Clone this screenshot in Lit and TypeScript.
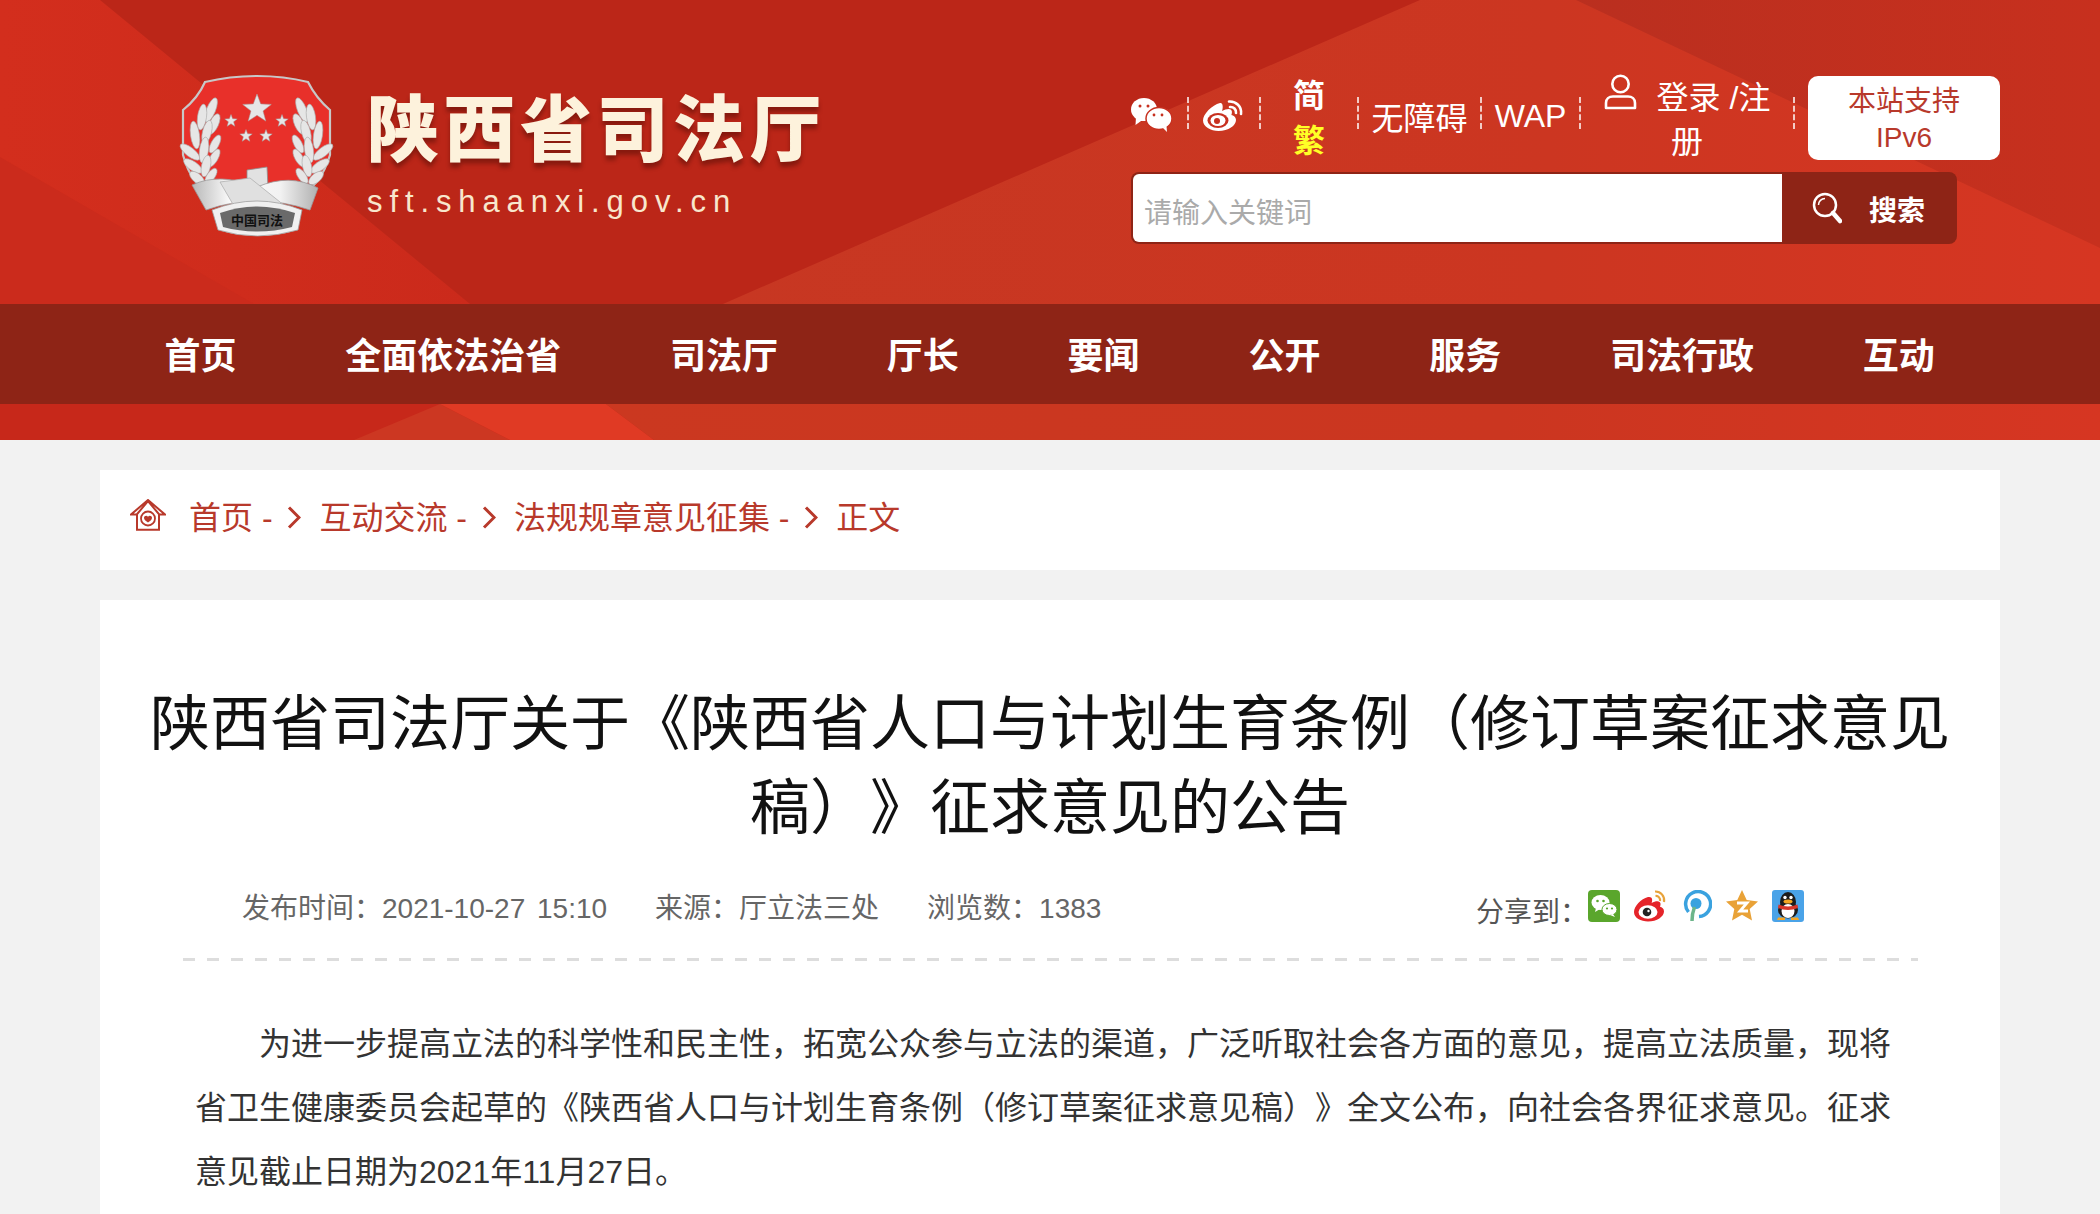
import { LitElement, html, css, svg } from "lit";
import { customElement } from "lit/decorators.js";

const NAV = ["首页","全面依法治省","司法厅","厅长","要闻","公开","服务","司法行政","互动"];
const CRUMBS = ["首页","互动交流","法规规章意见征集"];

const star = (cx:number, cy:number, r:number, fill="#e6e6e6") => {
  const pts:string[] = [];
  for (let i=0;i<10;i++){
    const a = (Math.PI/5)*i - Math.PI/2;
    const rr = i%2===0 ? r : r*0.42;
    pts.push(`${(cx+rr*Math.cos(a)).toFixed(1)},${(cy+rr*Math.sin(a)).toFixed(1)}`);
  }
  return svg`<polygon points=${pts.join(" ")} fill=${fill} stroke="#a0a0a0" stroke-width=".5"/>`;
};

const LEAVES = [[38,50,22,4.5,13],[29,57,8,4.5,13],[41,64,24,4.5,11],[22,75,-8,4.5,14],[34,72,14,4.5,12],[42,84,28,4,10],[17,92,-52,4.5,12],[31,90,8,4.5,13],[41,98,30,4,10],[20,106,-55,4.5,11],[33,106,12,4.5,11],[24,118,-50,4.5,9],[38,116,35,4,9]];
const laurel = (mirror:boolean) => svg`<g transform=${mirror?"translate(170,0) scale(-1,1)":"translate(3,0)"}>${LEAVES.map(([x,y,r,a,b])=>svg`<ellipse cx=${x} cy=${y} rx=${a} ry=${b} transform=${`rotate(${r} ${x} ${y})`} fill="#e6e6e6" stroke="#a8a8a8" stroke-width=".6"/>`)}</g>`;

const emblem = html`<svg class="emblem" viewBox="0 0 180 180" width="180" height="180" aria-hidden="true">
  <defs><linearGradient id="rib" x1="0" x2="1"><stop offset="0" stop-color="#b8b8b8"/><stop offset=".3" stop-color="#fafafa"/><stop offset=".7" stop-color="#f2f2f2"/><stop offset="1" stop-color="#b0b0b0"/></linearGradient></defs>
  <path d="M13 50 Q28 38 35 22 Q60 16 87 16 Q114 16 138 22 Q146 38 160 50 L160 95 Q150 128 128 135 L45 135 Q22 128 13 95Z" fill="#e8302a" stroke="#c8c8c8" stroke-width="2.2"/>
  ${star(87,49,15)}${star(61,61,6.5)}${star(112,61,6.5)}${star(76,76,6.5)}${star(96,76,6.5)}
  ${laurel(false)}${laurel(true)}
  <path d="M77 110 L97 107 L98 128 L77 130Z" fill="#e2e2e2" stroke="#8f8f8f" stroke-width=".8"/>
  <path d="M22 125 Q50 112 87 127 Q120 113 148 128 L140 150 Q87 132 36 150Z" fill="url(#rib)" stroke="#9a9a9a" stroke-width=".8"/>
  <path d="M50 122 L80 118 L115 146 L64 146Z" fill="#e0e0e0" stroke="#b0b0b0" stroke-width=".8"/>
  <path d="M42 150 Q87 132 132 150 L128 170 Q87 182 48 170Z" fill="#f0f0f0" stroke="#a0a0a0" stroke-width=".8"/>
  <path d="M50 153 Q87 140 125 153 L122 167 Q87 176 53 167Z" fill="#6a6a6a"/>
  <text x="87" y="165" text-anchor="middle" class="em-t">中国司法</text>
</svg>`;

const wechatW = html`<svg class="ic" style="width:41px;height:34px" viewBox="0 0 41 34" aria-hidden="true">
  <ellipse cx="13" cy="11.500" rx="13" ry="11.500" fill="#fff"/><path d="M5 19l-.5 8 7-5z" fill="#fff"/>
  <ellipse cx="28" cy="20.500" rx="13" ry="11" fill="#fff" stroke="#c7301f" stroke-width="1.500"/><path d="M32 30l4 4-.5-6z" fill="#fff"/>
  <circle cx="9" cy="8" r="1.500" fill="#c7301f"/><circle cx="17" cy="8" r="1.500" fill="#c7301f"/>
  <circle cx="23" cy="17" r="1.400" fill="#c7301f"/><circle cx="31" cy="17" r="1.400" fill="#c7301f"/>
</svg>`;

const weiboW = html`<svg class="ic" style="width:41px;height:32px" viewBox="0 0 41 32" aria-hidden="true">
  <path d="M17 4C9 6 0 15 0 21.500 0 27.800 7.700 32 15.500 32 25.500 32 33 26.500 33 21c0-3-2.600-4.500-4.600-5 .9-2.500.7-4.300-.4-5.300-1.800-1.600-5.500-.6-9 1.200 1.500-3.900.7-8.800-2-7.900z" fill="#fff"/>
  <ellipse cx="15" cy="21.500" rx="10.500" ry="7.500" fill="#c7301f"/><ellipse cx="15" cy="21.500" rx="7.500" ry="5.500" fill="#fff"/><circle cx="14" cy="22" r="3" fill="#c7301f"/>
  <path d="M26 2.500C33 2 39 7.500 38 15M27 8c3.500-.4 6.400 2.400 6 6" fill="none" stroke="#fff" stroke-width="2.600" stroke-linecap="round"/>
</svg>`;

const userIcon = html`<svg class="ui" viewBox="0 0 33 36" width="33" height="36" aria-hidden="true">
  <circle cx="16.500" cy="10" r="8.200" fill="none" stroke="#fff" stroke-width="2.600"/>
  <path d="M2 34v-5c0-4 3-6.500 7-6.500h15c4 0 7 2.500 7 6.500v5z" fill="none" stroke="#fff" stroke-width="2.600" stroke-linejoin="round"/>
</svg>`;

const searchIcon = html`<svg class="ic" style="width:30px;height:32px" viewBox="0 0 30 32" aria-hidden="true">
  <circle cx="13" cy="13" r="11" fill="none" stroke="#fff" stroke-width="2.500"/>
  <path d="M6.500 13A6.500 6.500 0 0 1 13 6.500" fill="none" stroke="#fff" stroke-width="1.500"/>
  <path d="M21 21l7 8" stroke="#fff" stroke-width="4.500" stroke-linecap="round"/>
</svg>`;

const homeIcon = html`<svg class="ic" style="width:36px;height:32px" viewBox="0 0 36 32" aria-hidden="true">
  <path d="M1 15.500h5.800L18 2l11.200 13.500H35L18 1zM7 15v15.800h22V15" fill="none" stroke="#b8392b" stroke-width="2"/>
  <circle cx="18" cy="19.500" r="7" fill="none" stroke="#b8392b" stroke-width="1.800"/>
  <path d="M18 23.500c-2.500-1.700-4-3-4-4.800 0-2.200 2.900-2.700 4-1 1.100-1.700 4-1.200 4 1 0 1.800-1.500 3.100-4 4.800z" fill="#b8392b"/>
</svg>`;

const chevron = html`<svg class="chev" viewBox="0 0 14 23" width="14" height="23" aria-hidden="true"><path d="M2 1.500L12 11.500 2 21.500" fill="none" stroke="#b8392b" stroke-width="3"/></svg>`;

const shareWechat = html`<svg viewBox="0 0 32 32" width="32" height="32" aria-hidden="true">
  <rect width="32" height="32" rx="4" fill="#5aa62c"/>
  <ellipse cx="12.500" cy="12.500" rx="9" ry="7.500" fill="#fff"/><path d="M8 18l-1 4 5-3z" fill="#fff"/>
  <ellipse cx="21.500" cy="19.500" rx="7.500" ry="6" fill="#fff" stroke="#5aa62c"/><path d="M25 24l2 3-5-2z" fill="#fff"/>
  <circle cx="9.500" cy="11" r="1.300" fill="#5aa62c"/><circle cx="15.500" cy="11" r="1.300" fill="#5aa62c"/><circle cx="19" cy="18.500" r="1.100" fill="#5aa62c"/><circle cx="24" cy="18.500" r="1.100" fill="#5aa62c"/>
</svg>`;
const shareWeibo = html`<svg viewBox="0 0 32 32" width="32" height="32" aria-hidden="true">
  <path d="M14 7C7 9 0 16 0 22c0 6 7 9.500 14 9.500C23 31.500 30 26.500 30 21.500c0-3-2-4.200-4-4.700 1-2.500.6-4-.4-4.800-1.700-1.300-5-.5-8 1 1.300-3.500.6-6.800-3.600-6z" fill="#e5242a"/>
  <ellipse cx="14" cy="22" rx="9.500" ry="6.800" fill="#fff"/><circle cx="13" cy="22" r="4.300" fill="#222"/><circle cx="14.500" cy="21" r="1.200" fill="#fff"/>
  <path d="M21 1.500c5.500-.3 10 4.500 9 10.500M21.500 6c3-.3 5 2.300 4.500 5" fill="none" stroke="#e8a33a" stroke-width="2.200"/>
</svg>`;
const shareP = html`<svg viewBox="0 0 32 32" width="32" height="32" aria-hidden="true">
  <path d="M8.500 22A12.500 12.500 0 1 1 19 26.500" fill="none" stroke="#3aa2df" stroke-width="3.500"/>
  <circle cx="16" cy="13.500" r="5.500" fill="#3aa2df"/>
  <path d="M14.500 17c-1.500 4-2.500 8-2.500 14" fill="none" stroke="#6cb58a" stroke-width="3.500"/>
</svg>`;
const shareZ = html`<svg viewBox="0 0 32 32" width="32" height="32" aria-hidden="true">
  <path d="M16 0l4.700 10 11.300 1.400-8.300 7.600 2.300 11.500L16 24.700 6 30.500 8.300 19 0 11.400 11.300 10z" fill="#e9a237"/>
  <path d="M11 13h10l-7 8h8" fill="none" stroke="#fff" stroke-width="2.800"/>
</svg>`;
const shareQQ = html`<svg viewBox="0 0 32 32" width="32" height="32" aria-hidden="true">
  <rect width="32" height="32" rx="3" fill="#4aa3e8"/>
  <ellipse cx="16" cy="12" rx="8" ry="10" fill="#1d1d1d"/>
  <ellipse cx="16" cy="20" rx="10" ry="8.500" fill="#1d1d1d"/>
  <ellipse cx="16" cy="21" rx="6.500" ry="7" fill="#fff"/>
  <ellipse cx="16" cy="11.500" rx="4.500" ry="2" fill="#f5a623"/>
  <circle cx="13" cy="7.500" r="1.700" fill="#fff"/><circle cx="19" cy="7.500" r="1.700" fill="#fff"/>
  <path d="M6.500 14.500q9.500 4 19 0l.5 3.500q-10 4-20 0z" fill="#d9362a"/>
  <path d="M6 27.500h7v2.500H5zM19 27.500h7l1 2.500h-8z" fill="#f5a623"/>
</svg>`;

@customElement("app-root")
export class AppRoot extends LitElement {
  static styles = css`
    :host{display:flex;flex-direction:column;background:#f2f2f2;font-family:"Liberation Sans","Noto Sans CJK SC",sans-serif;min-width:2100px;height:1214px;overflow:hidden;text-spacing-trim:space-all}
    .hero{position:relative;flex:none;height:440px;background:#bb2618;overflow:hidden}
    .facets{position:absolute;inset:0;width:100%;height:100%}
    .top{position:relative;display:flex;height:304px;padding:76px 100px 0 170px;box-sizing:border-box}
    .brand{display:flex;width:961px;flex:none}
    .emblem{margin-top:-16px;flex:none;width:180px;height:180px}
    .em-t{font:bold 13px "Noto Sans CJK SC",sans-serif;fill:#111}
    .names{margin-left:17px;display:flex;flex-direction:column}
    .cn{font:900 72px/72px "Noto Sans CJK SC",serif;letter-spacing:4.5px;color:#fdf2dc;margin-top:12px;text-shadow:0 5px 4px rgba(70,10,5,.45)}
    .dom{font:31px/40px "Liberation Sans",sans-serif;letter-spacing:6.900px;color:#f8e7cd;margin-top:22px}
    .tools{flex:1;display:flex;flex-direction:column}
    .row{display:flex;align-items:flex-start;height:88px}
    .links{display:flex;align-items:flex-start;width:664px;flex:none;color:#fff;font-size:32px}
    .cell{display:flex;align-items:center;justify-content:center;height:32px;margin-top:21px;box-sizing:border-box;border-right:2px dashed rgba(255,255,255,.75)}
    .ic{display:block;flex:none}
    .i1{width:58px;justify-content:flex-start}
    .i2{width:72px;padding-left:14px;justify-content:flex-start}
    .i1 .ic,.i2 .ic{margin-top:4px}
    .lang{width:98px;display:flex}
    .col{flex:1;display:flex;flex-direction:column;align-items:center;line-height:45px;font-weight:700;margin-top:-2px}
    .col .y{color:#ffff26}
    .lang .sep{flex:none;height:32px;width:0;margin-top:21px;border-right:2px dashed rgba(255,255,255,.75)}
    .ac{width:123px}.wap{width:99px}
    .cell span{margin-top:6px}
    .login{width:214px;display:flex}
    .lg{flex:1;text-align:center;line-height:44px;margin-top:-2px;padding:0 8px}
    .ui{display:inline-block;vertical-align:-1px;margin-right:20px}
    .login .sep{flex:none;height:32px;width:0;margin-top:21px;border-right:2px dashed rgba(255,255,255,.75)}
    .ipv6{width:192px;height:84px;margin-left:13px;flex:none;background:#fff;border-radius:10px;color:#b8392b;font-size:28px;line-height:36px;text-align:center;padding:8px 30px 0;box-sizing:border-box}
    .search{display:flex;width:826px;height:72px;margin-top:8px;background:#8e2416;border-radius:8px;padding:2px 0 2px 2px;box-sizing:border-box}
    .box{width:649px;background:#fff;border-radius:6px 0 0 6px;color:#aaa;font-size:28px;line-height:80px;height:68px;padding-left:11px;box-sizing:border-box}
    .btn{flex:1;display:flex;align-items:center;color:#fff;font-size:28px;font-weight:700;padding-left:30px;gap:27px}
    .btn span{margin-top:2px}
    .nav{position:relative;display:flex;height:100px;background:#8e2416;padding-left:110px}
    .nav a{padding:0 54.400px;color:#fff;font-size:36px;font-weight:700;line-height:105px;height:100px;white-space:nowrap}
    .crumbs{display:flex;flex:none;align-items:center;height:100px;margin:30px 100px 0;background:#fff;color:#b8392b;font-size:32px;padding:0 0 10px 30px;box-sizing:border-box;white-space:pre}
    .home{margin-right:23px}
    .chev{margin:4px 18px 0 6px;flex:none}
    .card{flex:1;margin:30px 100px 0;background:#fff;padding:83px 0 0}
    h1{margin:0 auto;width:1800px;font-size:60px;line-height:84px;font-weight:400;color:#111;text-align:center}
    .meta{display:flex;margin:37px 0 0;padding:0 196px 0 142px;height:70px;box-sizing:border-box;color:#666;font-size:28px;line-height:42px;word-spacing:4px}
    .meta span{margin-right:48px;white-space:nowrap}
    .share{margin-left:auto;display:flex;color:#555}
    .lb{margin-top:4px;white-space:nowrap}
    .icons{display:flex;gap:14px;margin-top:2px}
    .rule{margin:0 82px 0 83px;height:3px;background:repeating-linear-gradient(90deg,#ddd 0 12px,transparent 12px 24px)}
    .text{margin:51px 105px 0 95px;font-size:32px;line-height:64px;color:#333;text-indent:64px}
  `;
  render(){
    return html`
      <div class="hero">
        <svg class="facets" viewBox="0 0 2100 440" preserveAspectRatio="none" aria-hidden="true">
          <defs>
            <linearGradient id="g1" x1="0" x2="1"><stop offset="0" stop-color="#d32e1d"/><stop offset="1" stop-color="#cb2a1b"/></linearGradient>
            <linearGradient id="g2" x1="0" x2="1"><stop offset="0" stop-color="#c73722"/><stop offset=".6" stop-color="#cc3621"/><stop offset="1" stop-color="#d63622"/></linearGradient>
            <linearGradient id="g3" x1="0" x2="1"><stop offset="0" stop-color="#ba2f1f"/><stop offset="1" stop-color="#c7301e"/></linearGradient>
            <linearGradient id="g4" x1="0" x2="1"><stop offset="0" stop-color="#cb3820"/><stop offset=".6" stop-color="#cb3620"/><stop offset="1" stop-color="#d63622"/></linearGradient>
          </defs>
          <polygon points="0,0 100,0 470,304 0,304" fill="url(#g1)"/>
          <polygon points="0,157 254,304 0,304" fill="#cb2b1c"/>
          <polygon points="1420,0 2100,0 2100,304 723,304" fill="url(#g2)"/>
          <polygon points="1576,0 2100,0 2100,248" fill="url(#g3)"/>
          <polygon points="0,404 2100,404 2100,440 0,440" fill="#c7281a"/>
          <polygon points="354,440 440,404 510,440" fill="#cc3722"/>
          <polygon points="440,404 606,404 654,440 510,440" fill="#e03a24"/>
          <polygon points="606,404 2100,404 2100,440 654,440" fill="url(#g4)"/>
        </svg>
        <div class="top">
          <div class="brand">
            ${emblem}
            <div class="names">
              <div class="cn">陕西省司法厅</div>
              <div class="dom">sft.shaanxi.gov.cn</div>
            </div>
          </div>
          <div class="tools">
            <div class="row">
              <div class="links">
                <div class="cell i1">${wechatW}</div>
                <div class="cell i2">${weiboW}</div>
                <div class="lang"><div class="col"><span>简</span><span class="y">繁</span></div><div class="sep"></div></div>
                <div class="cell ac"><span>无障碍</span></div>
                <div class="cell wap"><span>WAP</span></div>
                <div class="login"><div class="lg">${userIcon}登录 /注册</div><div class="sep"></div></div>
              </div>
              <div class="ipv6">本站支持<br>IPv6</div>
            </div>
            <div class="search">
              <div class="box">请输入关键词</div>
              <div class="btn">${searchIcon}<span>搜索</span></div>
            </div>
          </div>
        </div>
        <nav class="nav">${NAV.map(n=>html`<a>${n}</a>`)}</nav>
      </div>
      <div class="crumbs">
        <span class="home">${homeIcon}</span>
        ${CRUMBS.map(c=>html`<span>${c} - </span>${chevron}`)}
        <span>正文</span>
      </div>
      <div class="card">
        <h1>陕西省司法厅关于《陕西省人口与计划生育条例（修订草案征求意见稿）》征求意见的公告</h1>
        <div class="meta">
          <span>发布时间：2021-10-27 15:10</span>
          <span>来源：厅立法三处</span>
          <span>浏览数：1383</span>
          <div class="share"><div class="lb">分享到：</div><div class="icons">${shareWechat}${shareWeibo}${shareP}${shareZ}${shareQQ}</div></div>
        </div>
        <div class="rule"></div>
        <p class="text">为进一步提高立法的科学性和民主性，拓宽公众参与立法的渠道，广泛听取社会各方面的意见，提高立法质量，现将省卫生健康委员会起草的《陕西省人口与计划生育条例（修订草案征求意见稿）》全文公布，向社会各界征求意见。征求意见截止日期为2021年11月27日。</p>
      </div>
    `;
  }
}
